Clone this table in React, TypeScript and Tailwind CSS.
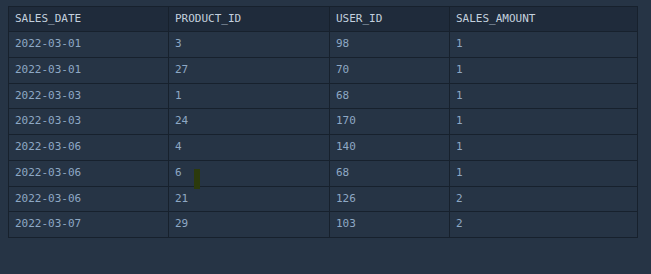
import React from 'react';

const rows = [
  ['2022-03-01', '3', '98', '1'],
  ['2022-03-01', '27', '70', '1'],
  ['2022-03-03', '1', '68', '1'],
  ['2022-03-03', '24', '170', '1'],
  ['2022-03-06', '4', '140', '1'],
  ['2022-03-06', '6', '68', '1'],
  ['2022-03-06', '21', '126', '2'],
  ['2022-03-07', '29', '103', '2'],
];

const headers = ['SALES_DATE', 'PRODUCT_ID', 'USER_ID', 'SALES_AMOUNT'];
const widths = ['w-[160px]', 'w-[161px]', 'w-[120px]', 'w-[188px]'];

export default function App() {
  return (
    <div className="w-[651px] h-[274px] bg-[#263445] pt-[6px] pl-[8px] font-['DejaVu_Sans_Mono',monospace] text-[11px]">
      <table className="border-collapse w-[629px] table-fixed">
        <thead>
          <tr className="bg-[#1f2b3b] h-[25px]">
            {headers.map((h, i) => (
              <th
                key={h}
                className={`${widths[i]} border border-[#17212d] px-[6px] text-left font-normal text-[#c3d0de]`}
              >
                {h}
              </th>
            ))}
          </tr>
        </thead>
        <tbody>
          {rows.map((r, ri) => (
            <tr key={ri} className="h-[25.75px]">
              {r.map((c, ci) => (
                <td
                  key={ci}
                  className="border border-[#17212d] px-[6px] text-[#8ea8c4] relative"
                >
                  {c}
                  {ri === 5 && ci === 1 && (
                    <span className="absolute left-[25px] top-[8px] w-[6px] h-[20px] bg-[#2c3a0c]" />
                  )}
                </td>
              ))}
            </tr>
          ))}
        </tbody>
      </table>
    </div>
  );
}
